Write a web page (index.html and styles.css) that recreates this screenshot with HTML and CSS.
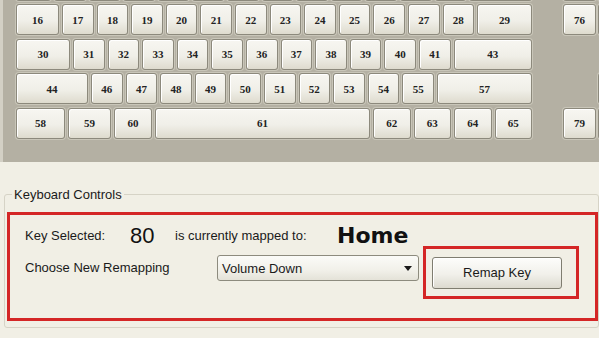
FILE: index.html
```html
<!DOCTYPE html>
<html>
<head>
<meta charset="utf-8">
<link rel="stylesheet" href="styles.css">
</head>
<body>
<div class="panel">
  <div class="kbd">
    <div class="main">
      <div class="row">
        <div class="key k35"></div>
        <div class="key"></div><div class="key"></div><div class="key"></div><div class="key"></div>
        <div class="key"></div><div class="key"></div><div class="key"></div><div class="key"></div>
        <div class="key"></div><div class="key"></div><div class="key"></div><div class="key"></div>
        <div class="key fill"></div>
      </div>
      <div class="row">
        <div class="key k43">16</div>
        <div class="key">17</div><div class="key">18</div><div class="key">19</div><div class="key">20</div>
        <div class="key">21</div><div class="key">22</div><div class="key">23</div><div class="key">24</div>
        <div class="key">25</div><div class="key">26</div><div class="key">27</div><div class="key">28</div>
        <div class="key fill">29</div>
      </div>
      <div class="row">
        <div class="key k54">30</div>
        <div class="key">31</div><div class="key">32</div><div class="key">33</div><div class="key">34</div>
        <div class="key">35</div><div class="key">36</div><div class="key">37</div><div class="key">38</div>
        <div class="key">39</div><div class="key">40</div><div class="key">41</div>
        <div class="key fill">43</div>
      </div>
      <div class="row">
        <div class="key k72">44</div>
        <div class="key">46</div><div class="key">47</div><div class="key">48</div><div class="key">49</div>
        <div class="key">50</div><div class="key">51</div><div class="key">52</div><div class="key">53</div>
        <div class="key">54</div><div class="key">55</div>
        <div class="key fill">57</div>
      </div>
      <div class="row">
        <div class="key k49">58</div>
        <div class="key k43">59</div>
        <div class="key k38">60</div>
        <div class="key k215">61</div>
        <div class="key k375">62</div>
        <div class="key k375">63</div>
        <div class="key k375">64</div>
        <div class="key fill">65</div>
      </div>
    </div>
    <div class="side">
      <div class="key"></div><div class="key"></div>
      <div class="key">76</div><div class="key"></div>
      <div class="blank"></div><div class="blank"></div>
      <div class="blank"></div><div class="key"></div>
      <div class="key">79</div><div class="key"></div>
    </div>
  </div>
</div>

<fieldset class="group">
  <legend class="group-title">Keyboard Controls</legend>
  <div class="hl">
    <div class="line1">
      <span class="lbl key-sel">Key Selected:</span>
      <span class="num">80</span>
      <span class="lbl mapped">is currently mapped to:</span>
      <span class="home">Home</span>
    </div>
    <div class="line2">
      <span class="lbl choose">Choose New Remapping</span>
      <div class="select">
        <span>Volume Down</span>
        <svg class="arrow" width="8" height="5" viewBox="0 0 8 5"><path d="M0 0H8L4 5Z" fill="#1a1a1a"/></svg>
      </div>
      <div class="hl2">
        <button class="btn">Remap Key</button>
      </div>
    </div>
  </div>
</fieldset>
</body>
</html>
```
FILE: styles.css
```css
html, body {
  margin: 0;
  padding: 0;
}
body {
  background: #f1efe5;
  font-family: "Liberation Sans", Arial, sans-serif;
  color: #1a1a1a;
  width: 599px;
  height: 338px;
  overflow: hidden;
}
.panel {
  height: 162px;
  background: #b4b0a3;
  border-left: 3px solid #d3d0c5;
  overflow: hidden;
}
.kbd {
  display: flex;
  margin-top: -30.5px;
  padding-left: 13px;
}
.main {
  width: 516px;
  display: flex;
  flex-direction: column;
  gap: 3.5px;
  flex: none;
}
.row {
  display: flex;
  gap: 3px;
  height: 31px;
}
.key {
  box-sizing: border-box;
  width: 31.6px;
  height: 31px;
  flex: none;
  border: 1px solid #8c897c;
  border-radius: 3px;
  background: linear-gradient(#f7f6f1 0%, #f0efe8 55%, #dedbce 100%);
  box-shadow: inset 1px 1px 0 #ffffff, 0 0 0 1px #c9c6b9;
  display: flex;
  align-items: center;
  justify-content: center;
  font-family: "Liberation Serif", "Times New Roman", serif;
  font-weight: bold;
  font-size: 11px;
  color: #222;
}
.k35 { width: 35px; }
.k43 { width: 43px; }
.k54 { width: 54px; }
.k72 { width: 72px; }
.k49 { width: 49px; }
.k38 { width: 38px; }
.k215 { width: 215px; }
.k375 { width: 37.5px; }
.fill { flex: 1; width: auto; }
.side {
  margin-left: 31px;
  display: grid;
  grid-template-columns: 33px 33px;
  grid-template-rows: repeat(5, 31px);
  column-gap: 2px;
  row-gap: 3.5px;
  flex: none;
}
.side .key { width: 33px; }

.group {
  margin: 25px 0 0 4px;
  padding: 0 0 6px 0;
  border: 1px solid #d6d3c6;
  border-radius: 3px;
  min-width: 0;
}
.group-title {
  margin-left: 7px;
  padding: 0 2px;
  font-size: 13px;
  line-height: 15px;
}
.hl {
  margin: 10px 0 0 2px;
  border: 3px solid #d42626;
  padding: 0 0 19px 15px;
}
.line1 {
  display: flex;
  align-items: center;
  padding-top: 11px;
  height: 20px;
}
.lbl {
  font-size: 13px;
  line-height: 16px;
  flex: none;
}
.key-sel { width: 105px; }
.num {
  width: 45px;
  font-size: 22px;
  line-height: 20px;
  color: #111;
  flex: none;
}
.mapped { width: 162px; }
.home {
  font-family: "DejaVu Sans", sans-serif;
  font-weight: bold;
  font-size: 22px;
  line-height: 20px;
  color: #111;
}
.line2 {
  display: flex;
  align-items: flex-start;
  height: 53px;
}
.choose {
  width: 192px;
  margin-top: 14px;
}
.select {
  box-sizing: border-box;
  width: 202px;
  height: 26px;
  margin-top: 9px;
  margin-right: 4px;
  border: 1px solid #8d8b7e;
  border-radius: 3px;
  background: linear-gradient(#fbfbf8, #f1f0e9 60%, #e4e2d8);
  display: flex;
  align-items: center;
  justify-content: space-between;
  padding: 0 6px 0 4px;
  font-size: 13px;
}
.arrow { display: block; }
.hl2 {
  box-sizing: border-box;
  width: 156px;
  height: 53px;
  border: 3px solid #d42626;
  display: flex;
  align-items: center;
  padding-left: 6px;
}
.btn {
  box-sizing: border-box;
  width: 130px;
  height: 32px;
  border: 1px solid #7f7d70;
  border-radius: 3px;
  background: linear-gradient(#fdfdfb, #f1f0ea 55%, #dcdacf);
  box-shadow: inset 1px 1px 0 #fff;
  font-family: "Liberation Sans", Arial, sans-serif;
  font-size: 13px;
  color: #1a1a1a;
  padding: 0;
}
```
